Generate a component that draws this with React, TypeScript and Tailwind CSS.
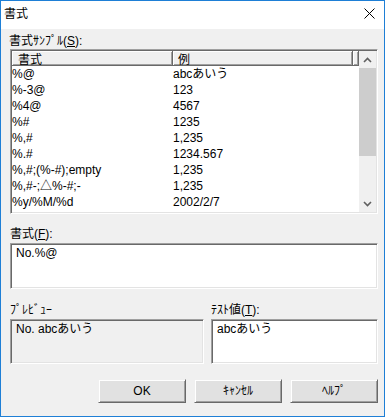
const rows: [string, string][] = [
  ['%@', 'abcあいう'],
  ['%-3@', '123'],
  ['%4@', '4567'],
  ['%#', '1235'],
  ['%,#', '1,235'],
  ['%.#', '1234.567'],
  ['%,#;(%-#);empty', '1,235'],
  ['%,#-;△%-#;-', '1,235'],
  ['%y/%M/%d', '2002/2/7'],
];

const sunken =
  'border border-t-[#a0a0a0] border-l-[#a0a0a0] border-b-white border-r-white shadow-[inset_1px_1px_0_#696969,inset_-1px_-1px_0_#e3e3e3]';

const headCell =
  'h-full border-r border-b border-[#696969] shadow-[inset_1px_1px_0_#fff,inset_-1px_-1px_0_#a0a0a0] leading-[15px]';

function Btn({ label }: { label: string }) {
  return (
    <button className="w-[88px] h-[24px] bg-[#e1e1e1] border border-t-[#f0f0f0] border-l-[#f0f0f0] border-b-[#696969] border-r-[#696969] shadow-[inset_1px_1px_0_#fff,inset_-1px_-1px_0_#a0a0a0] text-[12px] text-black">
      {label}
    </button>
  );
}

export default function App() {
  return (
    <div
      className="w-[385px] h-[417px] flex flex-col border border-[#1e7fd6] bg-[#f0f0f0] text-[12px] text-black"
      style={{ fontFamily: '"Liberation Sans", "Noto Sans CJK JP", sans-serif' }}
    >
      {/* title bar */}
      <div className="h-[28px] bg-white flex items-start justify-between pl-[3px] pr-[9px]">
        <span className="pt-[4px] leading-[16px]" style={{ fontFamily: '"Noto Sans CJK JP", sans-serif' }}>
          書式
        </span>
        <svg width="11" height="11" viewBox="0 0 11 11" className="mt-[7px]">
          <path d="M0.5 0.5 L10.5 10.5 M10.5 0.5 L0.5 10.5" stroke="#000" strokeWidth="1" fill="none" />
        </svg>
      </div>

      <div className="flex-1 flex flex-col pl-[9px] pr-[6px] pt-[4px]">
        <div className="leading-[16px] -ml-[1px]">書式ｻﾝﾌﾟﾙ(<span className="underline">S</span>):</div>

        <div className={`h-[165px] bg-white flex p-[1px] ${sunken}`}>
          <div className="flex-1 flex flex-col">
            <div className="h-[15px] flex bg-[#f0f0f0]">
              <div className={`w-[161px] pl-[6px] ${headCell}`} style={{ fontFamily: '"Noto Sans CJK JP", sans-serif' }}>
                書式
              </div>
              <div className={`w-[180px] pl-[5px] ${headCell}`} style={{ fontFamily: '"Noto Sans CJK JP", sans-serif' }}>
                例
              </div>
              <div className={`flex-1 ${headCell}`} />
            </div>
            {rows.map(([fmt, ex]) => (
              <div key={fmt} className="h-[16px] flex leading-[16px] whitespace-nowrap">
                <div className="w-[161px]">{fmt}</div>
                <div>{ex}</div>
              </div>
            ))}
          </div>
          <div className="w-[17px] flex flex-col bg-[#f0f0f0]">
            <div className="h-[17px] flex items-center justify-center">
              <svg width="9" height="6" viewBox="0 0 9 6">
                <path d="M1 5 L4.5 1.5 L8 5" stroke="#606060" strokeWidth="1.6" fill="none" />
              </svg>
            </div>
            <div className="h-[88px] bg-[#cdcdcd]" />
            <div className="flex-1" />
            <div className="h-[17px] flex items-center justify-center">
              <svg width="9" height="6" viewBox="0 0 9 6">
                <path d="M1 1 L4.5 4.5 L8 1" stroke="#606060" strokeWidth="1.6" fill="none" />
              </svg>
            </div>
          </div>
        </div>

        <div className="mt-[12px] leading-[16px]">書式(<span className="underline">F</span>):</div>
        <div className={`mt-[1px] h-[46px] bg-white pl-[5px] pt-[1px] leading-[16px] ${sunken}`}>No.%@</div>

        <div className="mt-[13px] flex gap-[7px]">
          <div className="w-[194px] flex flex-col">
            <div className="leading-[16px]">ﾌﾟﾚﾋﾞｭｰ</div>
            <div className={`mt-[1px] h-[45px] bg-[#f0f0f0] pl-[5px] pt-[1px] leading-[16px] ${sunken}`}>
              No. abcあいう
            </div>
          </div>
          <div className="flex-1 flex flex-col">
            <div className="leading-[16px]">ﾃｽﾄ値(<span className="underline">T</span>):</div>
            <div className={`mt-[1px] h-[45px] bg-white pl-[5px] pt-[1px] leading-[16px] ${sunken}`}>abcあいう</div>
          </div>
        </div>

        <div className="mt-[15px] flex justify-end gap-[8px]">
          <Btn label="OK" />
          <Btn label="ｷｬﾝｾﾙ" />
          <Btn label="ﾍﾙﾌﾟ" />
        </div>
      </div>
    </div>
  );
}
